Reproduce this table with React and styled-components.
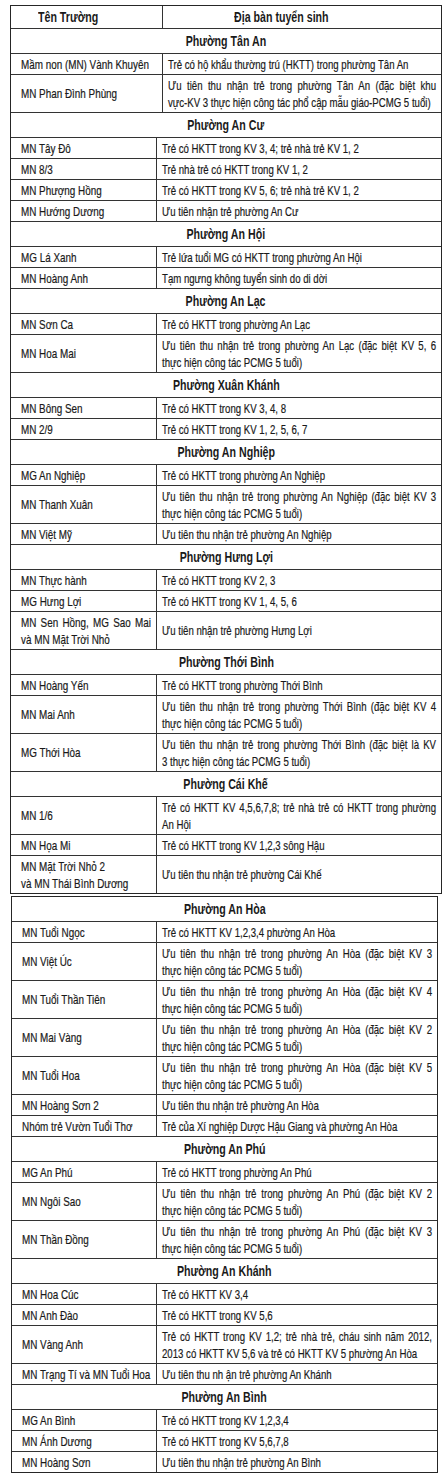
import styled, { createGlobalStyle } from "styled-components";

const GlobalStyle = createGlobalStyle`
  body {
    margin: 0;
    background: #fff;
  }
`;

const top = [
  {
    ward: "Phường Tân An",
    split: 151,
    rows: [
      ["Mầm non (MN) Vành Khuyên", "Trẻ có hộ khẩu thường trú (HKTT) trong phường Tân An"],
      [
        "MN Phan Đình Phùng",
        [
          "Ưu tiên thu nhận trẻ trong phường Tân An (đặc biệt khu",
          "vực-KV 3 thực hiện công tác phổ cập mẫu giáo-PCMG 5 tuổi)",
        ],
      ],
    ],
  },
  {
    ward: "Phường An Cư",
    rows: [
      ["MN Tây Đô", "Trẻ có HKTT trong KV 3, 4; trẻ nhà trẻ KV 1, 2"],
      ["MN 8/3", "Trẻ nhà trẻ có HKTT trong KV 1, 2"],
      ["MN Phượng Hồng", "Trẻ có HKTT trong KV 5, 6; trẻ nhà trẻ KV 1, 2"],
      ["MN Hướng Dương", "Ưu tiên nhận trẻ phường An Cư"],
    ],
  },
  {
    ward: "Phường An Hội",
    rows: [
      ["MG Lá Xanh", "Trẻ lứa tuổi MG có HKTT trong phường An Hội"],
      ["MN Hoàng Anh", "Tạm ngưng không tuyển sinh do di dời"],
    ],
  },
  {
    ward: "Phường An Lạc",
    rows: [
      ["MN Sơn Ca", "Trẻ có HKTT trong phường An Lạc"],
      [
        "MN Hoa Mai",
        ["Ưu tiên thu nhận trẻ trong phường An Lạc (đặc biệt KV 5, 6", "thực hiện công tác PCMG 5 tuổi)"],
      ],
    ],
  },
  {
    ward: "Phường Xuân Khánh",
    rows: [
      ["MN Bông Sen", "Trẻ có HKTT trong KV 3, 4, 8"],
      ["MN 2/9", "Trẻ có HKTT trong KV 1, 2, 5, 6, 7"],
    ],
  },
  {
    ward: "Phường An Nghiệp",
    rows: [
      ["MG An Nghiệp", "Trẻ có HKTT trong phường An Nghiệp"],
      [
        "MN Thanh Xuân",
        ["Ưu tiên thu nhận trẻ trong phường An Nghiệp (đặc biệt KV 3", "thực hiện công tác PCMG 5 tuổi)"],
      ],
      ["MN Việt Mỹ", "Ưu tiên thu nhận trẻ phường An Nghiệp"],
    ],
  },
  {
    ward: "Phường Hưng Lợi",
    rows: [
      ["MN Thực hành", "Trẻ có HKTT trong KV 2, 3"],
      ["MG Hưng Lợi", "Trẻ có HKTT trong KV 1, 4, 5, 6"],
      [["MN Sen Hồng, MG Sao Mai", "và MN Mặt Trời Nhỏ"], "Ưu tiên nhận trẻ phường Hưng Lợi"],
    ],
  },
  {
    ward: "Phường Thới Bình",
    rows: [
      ["MN Hoàng Yến", "Trẻ có HKTT trong phường Thới Bình"],
      [
        "MN Mai Anh",
        ["Ưu tiên thu nhận trẻ trong phường Thới Bình (đặc biệt KV 4", "thực hiện công tác PCMG 5 tuổi)"],
      ],
      [
        "MG Thới Hòa",
        ["Ưu tiên thu nhận trẻ trong phường Thới Bình (đặc biệt là KV", "3 thực hiện công tác PCMG 5 tuổi)"],
      ],
    ],
  },
  {
    ward: "Phường Cái Khế",
    rows: [
      ["MN 1/6", ["Trẻ có HKTT KV 4,5,6,7,8; trẻ nhà trẻ có HKTT trong phường", "An Hội"]],
      ["MN Họa Mi", "Trẻ có HKTT trong KV 1,2,3 sông Hậu"],
      [["MN Mặt Trời Nhỏ 2", "và MN Thái Bình Dương"], "Ưu tiên thu nhận trẻ phường Cái Khế", true],
    ],
  },
];

const pcmg = (ward, kv) => [
  `Ưu tiên thu nhận trẻ trong phường ${ward} (đặc biệt KV ${kv}`,
  "thực hiện công tác PCMG 5 tuổi)",
];

const bottom = [
  {
    ward: "Phường An Hòa",
    rows: [
      ["MN Tuổi Ngọc", "Trẻ có HKTT KV 1,2,3,4 phường An Hòa"],
      ["MN Việt Úc", pcmg("An Hòa", 3)],
      ["MN Tuổi Thần Tiên", pcmg("An Hòa", 4)],
      ["MN Mai Vàng", pcmg("An Hòa", 2)],
      ["MN Tuổi Hoa", pcmg("An Hòa", 5)],
      ["MN Hoàng Sơn 2", "Ưu tiên thu nhận trẻ phường An Hòa"],
      ["Nhóm trẻ Vườn Tuổi Thơ", "Trẻ của Xí nghiệp Dược Hậu Giang và phường An Hòa"],
    ],
  },
  {
    ward: "Phường An Phú",
    rows: [
      ["MG An Phú", "Trẻ có HKTT trong phường An Phú"],
      ["MN Ngôi Sao", pcmg("An Phú", 2)],
      ["MN Thần Đồng", pcmg("An Phú", 3)],
    ],
  },
  {
    ward: "Phường An Khánh",
    rows: [
      ["MN Hoa Cúc", "Trẻ có HKTT KV 3,4"],
      ["MN Anh Đào", "Trẻ có HKTT trong KV 5,6"],
      [
        "MN Vàng Anh",
        [
          "Trẻ có HKTT trong KV 1,2; trẻ nhà trẻ, cháu sinh năm 2012,",
          "2013 có HKTT KV 5,6 và trẻ có HKTT KV 5 phường An Hòa",
        ],
      ],
      ["MN Trạng Tí và MN Tuổi Hoa", "Ưu tiên thu nh ận trẻ phường An Khánh"],
    ],
  },
  {
    ward: "Phường An Bình",
    rows: [
      ["MG An Bình", "Trẻ có HKTT trong KV 1,2,3,4"],
      ["MN Ánh Dương", "Trẻ có HKTT trong KV 5,6,7,8"],
      ["MN Hoàng Sơn", "Ưu tiên thu nhận trẻ phường An Bình"],
    ],
  },
];

function CellText({ text, plain, squeeze }) {
  const lines = Array.isArray(text) ? text : [text];
  return lines.map((line, i) => (
    <Line key={i} $squeeze={squeeze} $justify={!plain && i < lines.length - 1}>
      {line}
    </Line>
  ));
}

function Sections({ data, split }) {
  return data.map((section) => (
    <div key={section.ward}>
      <WardRow>
        <Label>{section.ward}</Label>
      </WardRow>
      {section.rows.map(([name, area, plain]) => (
        <Row key={Array.isArray(name) ? name[0] : name} $split={section.split || split}>
          <NameCell>
            <CellText text={name} plain={plain} squeeze={0.76} />
          </NameCell>
          <AreaCell>
            <CellText text={area} squeeze={0.74} />
          </AreaCell>
        </Row>
      ))}
    </div>
  ));
}

export default function App() {
  return (
    <>
      <GlobalStyle />
      <Page>
        <Table $left={10} $width={432}>
          <HeadRow $split={151}>
            <HeadCell $pad={27}>
              <Label $origin="left">Tên Trường</Label>
            </HeadCell>
            <HeadCell $pad={71}>
              <Label $origin="left">Địa bàn tuyển sinh</Label>
            </HeadCell>
          </HeadRow>
          <Sections data={top} split={145} />
        </Table>
        <Table $left={11} $width={427}>
          <Sections data={bottom} split={144} />
        </Table>
      </Page>
    </>
  );
}

const Page = styled.div`
  padding: 5px 0 10px;
  display: flex;
  flex-direction: column;
  gap: 2px;
  font-family: "Liberation Sans", Arial, sans-serif;
  color: #1a1a1a;
`;

const Table = styled.div`
  box-sizing: border-box;
  margin-left: ${({ $left }) => $left}px;
  width: ${({ $width }) => $width}px;
  border: 1.5px solid #262626;
  border-top-width: 1px;

  & > div:first-child > div:first-child {
    border-top: none;
  }
`;

const HeadRow = styled.div`
  display: grid;
  grid-template-columns: ${({ $split }) => $split}px 1fr;
  height: 22px;
`;

const HeadCell = styled.div`
  display: flex;
  align-items: center;
  padding-left: ${({ $pad }) => $pad}px;
  font-size: 14px;
  font-weight: 700;
  white-space: nowrap;

  & + & {
    border-left: 1px solid #333;
  }
`;

const Label = styled.span`
  display: inline-block;
  white-space: nowrap;
  transform: scaleX(0.76);
  transform-origin: ${({ $origin }) => $origin || "center"} center;
`;

const WardRow = styled.div`
  border-top: 1px solid #333;
  height: 24px;
  display: flex;
  align-items: center;
  justify-content: center;
  font-size: 14px;
  font-weight: 700;
`;

const Row = styled.div`
  display: grid;
  grid-template-columns: ${({ $split }) => $split}px 1fr;
  border-top: 1px solid #333;
  min-height: 20px;
`;

const NameCell = styled.div`
  display: flex;
  flex-direction: column;
  justify-content: center;
  padding: 1.5px 5px 1.5px 10px;
  overflow: hidden;
  font-size: 13px;
  line-height: 17px;
  -webkit-text-stroke: 0.2px currentColor;
`;

const AreaCell = styled.div`
  display: flex;
  flex-direction: column;
  justify-content: center;
  padding: 1.5px 5px;
  border-left: 1px solid #333;
  overflow: hidden;
  font-size: 13px;
  line-height: 17px;
  -webkit-text-stroke: 0.2px currentColor;
`;

const Line = styled.div`
  width: ${({ $squeeze }) => `calc(100% / ${$squeeze})`};
  white-space: nowrap;
  transform: ${({ $squeeze }) => `scaleX(${$squeeze})`};
  transform-origin: left center;
  text-align: ${({ $justify }) => ($justify ? "justify" : "left")};
  text-align-last: ${({ $justify }) => ($justify ? "justify" : "auto")};
`;
